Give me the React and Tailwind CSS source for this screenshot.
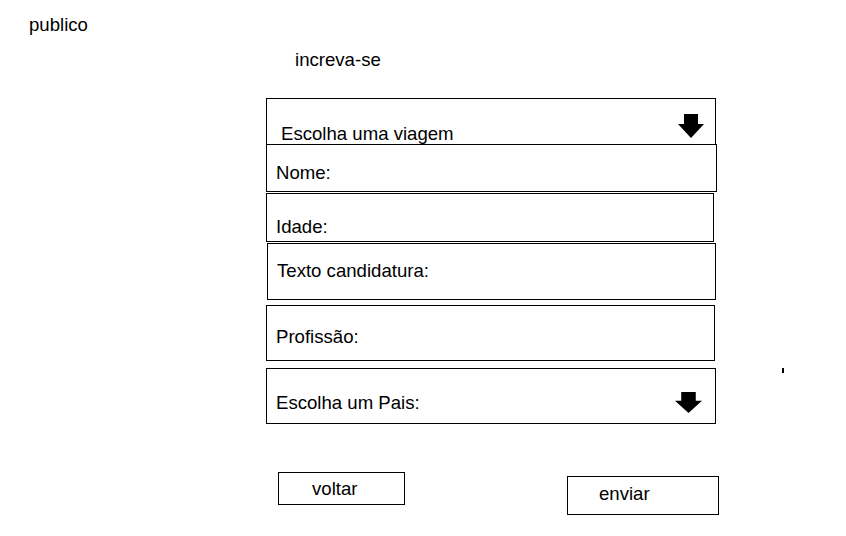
import React from 'react';

// down arrow drawn like the wireframe's select marker
const DownArrow = ({ w = 26, h = 24, className = '' }) => (
    <svg width={w} height={h} viewBox="0 0 26 24" preserveAspectRatio="none" className={className}>
        <path d="M6 0 H20 V10 H26 L13 24 L0 10 H6 Z" fill="black" />
    </svg>
);

const App = () => {
    return (
        <div className="relative w-[846px] h-[536px] bg-white text-black text-[18.6px] leading-[20px] font-['Liberation_Sans',Arial,sans-serif]">
            <div className="pt-[15px] pl-[29px]">publico</div>
            <div className="mt-[15px] pl-[295px]">increva-se</div>

            <div className="mt-[28px] flex flex-col">
                {/* select: viagem */}
                <div className="ml-[266px] w-[450px] h-[47px] border border-black flex items-start">
                    <span className="flex-1 pt-[25px] pl-[14px]">Escolha uma viagem</span>
                    <DownArrow className="mt-[15px] mr-[11px]" />
                </div>
                <div className="ml-[266px] -mt-px w-[451px] h-[48px] border border-black pt-[18px] pl-[9px]">Nome:</div>
                <div className="ml-[266px] mt-px w-[448px] h-[49px] border border-black pt-[23px] pl-[9px]">Idade:</div>
                <div className="ml-[267px] mt-px w-[449px] h-[57px] border border-black pt-[17px] pl-[9px]">Texto candidatura:</div>
                <div className="ml-[266px] mt-[5px] w-[449px] h-[56px] border border-black pt-[21px] pl-[9px]">Profissão:</div>
                {/* select: pais */}
                <div className="ml-[266px] mt-[7px] w-[450px] h-[56px] border border-black flex items-start">
                    <span className="flex-1 pt-[24px] pl-[9px]">Escolha um Pais:</span>
                    <DownArrow w={27} h={21} className="mt-[23px] mr-[13px]" />
                </div>

                <div className="mt-[48px] flex items-start">
                    <div className="ml-[278px] w-[127px] h-[33px] border border-black pt-[6px] pl-[33px]">voltar</div>
                    <div className="ml-[162px] mt-[4px] w-[152px] h-[39px] border border-black pt-[7px] pl-[31px]">enviar</div>
                </div>
            </div>

            <div className="absolute left-[782px] top-[368px] w-[2px] h-[5px] bg-black" />
        </div>
    );
};

export default App;
